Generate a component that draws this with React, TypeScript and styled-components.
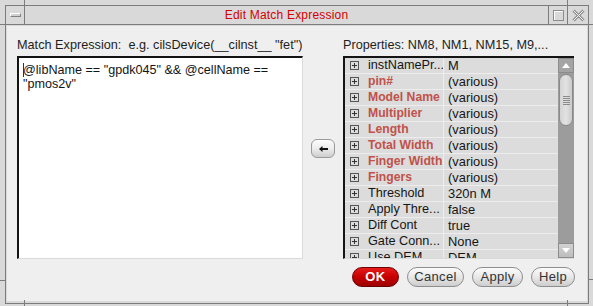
import React from "react";
import styled, { createGlobalStyle } from "styled-components";

const Global = createGlobalStyle`
  html, body { margin: 0; padding: 0; background: #d9d9d9; }
  body {
    width: 593px; height: 306px; overflow: hidden;
    font-family: "Liberation Sans", Arial, sans-serif;
  }
`;

const FRAME = "#d9d9d9";
const LINE = "#7c7c7c";

const Screen = styled.div`
  position: relative;
  width: 593px;
  height: 306px;
  box-sizing: border-box;
  padding: 5px 4px 2px 5px;
  background: ${FRAME};
  display: flex;
`;

const Tick = styled.div<{ $x: number; $y: number; $w: number; $h: number }>`
  position: absolute;
  left: ${(p) => p.$x}px;
  top: ${(p) => p.$y}px;
  width: ${(p) => p.$w}px;
  height: ${(p) => p.$h}px;
  background: ${LINE};
`;

const Window = styled.div`
  flex: 1;
  display: flex;
  flex-direction: column;
  border: 1px solid ${LINE};
  background: ${FRAME};
`;

const TitleBar = styled.div`
  display: flex;
  height: 19px;
  box-sizing: border-box;
  border-bottom: 1px solid ${LINE};
`;

const TitleCell = styled.div<{ $w?: number; $side?: "left" | "right" }>`
  ${(p) => (p.$w ? `width: ${p.$w}px;` : "flex: 1;")}
  box-sizing: border-box;
  ${(p) => (p.$side === "left" ? `border-right: 1px solid ${LINE};` : "")}
  ${(p) => (p.$side === "right" ? `border-left: 1px solid ${LINE};` : "")}
  display: flex;
  align-items: center;
  justify-content: center;
`;

const Title = styled.span`
  font-size: 12px;
  color: #d40000;
  letter-spacing: 0.2px;
`;

const MinBar = styled.div`
  width: 11px;
  height: 4px;
  box-sizing: border-box;
  border: 1px solid;
  border-color: #ffffff #808080 #808080 #ffffff;
  margin-left: 1px;
  background: #d0d0d0;
`;

const MaxBox = styled.div`
  width: 11px;
  height: 11px;
  box-sizing: border-box;
  border: 1px solid #8c8c8c;
  box-shadow: inset 1px 1px 0 #ffffff;
  margin-left: 1px;
  margin-top: 1px;
`;

const Body = styled.div`
  flex: 1;
  padding: 1px 1px 2px 1px;
  display: flex;
`;

const Panel = styled.div`
  flex: 1;
  background: #efefef;
  padding: 12px 13px 13px 10px;
  display: flex;
  flex-direction: column;
`;

const Main = styled.div`
  display: grid;
  grid-template-columns: 286px 24px 231px;
  grid-template-rows: 14px 203px;
  column-gap: 8px;
  row-gap: 4px;
`;

const Label = styled.div<{ $col: number }>`
  grid-column: ${(p) => p.$col};
  grid-row: 1;
  font-size: 12.7px;
  line-height: 14px;
  color: #1e1e1e;
  white-space: pre;
`;

const TextBox = styled.div`
  grid-column: 1;
  grid-row: 2;
  background: #ffffff;
  border-top: 2px solid #141414;
  border-left: 2px solid #141414;
  border-right: 1px solid #dadada;
  border-bottom: 1px solid #dadada;
  padding: 5px 4px;
  font-size: 12.6px;
  line-height: 14px;
  color: #141414;
  overflow: hidden;
`;

const Caret = styled.span`
  display: inline-block;
  width: 1px;
  height: 14px;
  background: #333;
  vertical-align: -3px;
  margin-right: -1px;
`;

const ArrowButton = styled.button`
  grid-column: 2;
  grid-row: 2;
  align-self: start;
  margin-top: 83px;
  width: 24px;
  height: 19px;
  padding: 0;
  border: 1px solid #9a9a9a;
  border-radius: 6px;
  background: linear-gradient(#fdfdfd, #ececec 50%, #cdcdcd);
  display: flex;
  align-items: center;
  justify-content: center;
`;

const PropBox = styled.div`
  grid-column: 3;
  grid-row: 2;
  border-top: 2px solid #141414;
  border-left: 2px solid #141414;
  border-bottom: 1px solid #dadada;
  display: flex;
  overflow: hidden;
`;

const PropList = styled.div`
  flex: 1;
  background: #dcdcdc;
  overflow: hidden;
`;

const Row = styled.div`
  display: grid;
  grid-template-columns: 98px 1px 1fr;
  height: 16px;
  box-sizing: border-box;
  border-bottom: 1px solid #ededed;
  background: #dcdcdc;
`;

const NameCell = styled.div<{ $strong: boolean }>`
  display: flex;
  align-items: center;
  gap: 9px;
  padding-left: 5px;
  font-size: ${(p) => (p.$strong ? "12.2px" : "12.7px")};
  line-height: 15px;
  white-space: nowrap;
  overflow: hidden;
  font-weight: ${(p) => (p.$strong ? 700 : 400)};
  color: ${(p) => (p.$strong ? "#c0524a" : "#151515")};
`;

const Divider = styled.div`
  background: #ededed;
`;

const ValueCell = styled.div`
  padding-left: 4px;
  font-size: 12.9px;
  line-height: 15px;
  color: #151515;
  white-space: nowrap;
  overflow: hidden;
`;

const ScrollBar = styled.div`
  width: 16px;
  display: flex;
  flex-direction: column;
  background: #9c9c9c;
`;

const ScrollBtn = styled.div<{ $light?: boolean }>`
  height: 15px;
  box-sizing: border-box;
  border: 1px solid #8c8c8c;
  background: ${(p) => (p.$light ? "linear-gradient(#d2d2d2, #bdbdbd)" : "#a4a4a4")};
  display: flex;
  align-items: center;
  justify-content: center;
`;

const Thumb = styled.div`
  height: 52px;
  margin: 1px 1px 0 1px;
  box-sizing: border-box;
  border: 1px solid #8a8a8a;
  border-radius: 7px;
  background: linear-gradient(to right, #d4d4d4, #e2e2e2 50%, #cbcbcb);
  display: flex;
  flex-direction: column;
  align-items: center;
  justify-content: center;
  gap: 1px;
`;

const Grip = styled.div`
  width: 7px;
  height: 1px;
  background: #8a8a8a;
`;

const Track = styled.div`
  flex: 1;
`;

const ButtonRow = styled.div`
  margin-top: 8px;
  display: flex;
  justify-content: flex-end;
  gap: 8px;
  margin-right: -1px;
`;

const PillButton = styled.button<{ $w: number; $primary?: boolean }>`
  width: ${(p) => p.$w}px;
  height: 20px;
  padding: 0;
  border-radius: 10px;
  border: 1px solid ${(p) => (p.$primary ? "#6a0000" : "#8e8e8e")};
  background: ${(p) =>
    p.$primary
      ? "linear-gradient(#e61a1a, #c80000 50%, #9c0000)"
      : "linear-gradient(#fbfbfb, #e8e8e8 50%, #cdcdcd)"};
  color: ${(p) => (p.$primary ? "#ffffff" : "#333333")};
  font-family: "Liberation Sans", Arial, sans-serif;
  font-size: 13px;
  font-weight: ${(p) => (p.$primary ? 700 : 400)};
  letter-spacing: ${(p) => (p.$primary ? "0.5px" : "0.3px")};
  line-height: 18px;
`;

const ExpandIcon = () => (
  <svg width="9" height="9" viewBox="0 0 9 9" style={{ flex: "none" }}>
    <rect x="0.5" y="0.5" width="8" height="8" fill="none" stroke="#555" />
    <path d="M2 4.5h5M4.5 2v5" stroke="#333" />
  </svg>
);

const rows = [
  { name: "instNamePr...", value: "M", strong: false },
  { name: "pin#", value: "(various)", strong: true },
  { name: "Model Name", value: "(various)", strong: true },
  { name: "Multiplier", value: "(various)", strong: true },
  { name: "Length", value: "(various)", strong: true },
  { name: "Total Width", value: "(various)", strong: true },
  { name: "Finger Width", value: "(various)", strong: true },
  { name: "Fingers", value: "(various)", strong: true },
  { name: "Threshold", value: "320n M", strong: false },
  { name: "Apply Thre...", value: "false", strong: false },
  { name: "Diff Cont", value: "true", strong: false },
  { name: "Gate Conn...", value: "None", strong: false },
  { name: "Use DEM", value: "DEM", strong: false },
];

export default function App() {
  return (
    <>
      <Global />
      <Screen>
        <Tick $x={24} $y={0} $w={1} $h={5} />
        <Tick $x={567} $y={0} $w={1} $h={5} />
        <Tick $x={24} $y={300} $w={1} $h={6} />
        <Tick $x={567} $y={300} $w={1} $h={6} />
        <Tick $x={0} $y={24} $w={5} $h={1} />
        <Tick $x={589} $y={24} $w={4} $h={1} />
        <Tick $x={0} $y={280} $w={5} $h={1} />
        <Tick $x={589} $y={279} $w={4} $h={1} />
        <Window>
          <TitleBar>
            <TitleCell $w={19} $side="left">
              <MinBar />
            </TitleCell>
            <TitleCell>
              <Title>Edit Match Expression</Title>
            </TitleCell>
            <TitleCell $w={19} $side="right">
              <MaxBox />
            </TitleCell>
            <TitleCell $w={21} $side="right">
              <svg width="13" height="13" viewBox="0 0 13 13">
                <path d="M1.5 1.5L11.5 11.5M11.5 1.5L1.5 11.5" stroke="#8e8e8e" strokeWidth="3" />
                <path d="M1.5 1.5L11.5 11.5M11.5 1.5L1.5 11.5" stroke="#f2f2f2" strokeWidth="1" />
              </svg>
            </TitleCell>
          </TitleBar>
          <Body>
            <Panel>
              <Main>
                <Label $col={1}>{'Match Expression:  e.g. cilsDevice(__cilnst__ "fet")'}</Label>
                <Label $col={3}>Properties: NM8, NM1, NM15, M9,...</Label>
                <TextBox>
                  <Caret />
                  @libName == "gpdk045" &amp;&amp; @cellName == "pmos2v"
                </TextBox>
                <ArrowButton>
                  <svg width="9" height="6" viewBox="0 0 9 6">
                    <path d="M0 3L3.5 0V6Z" fill="#111" />
                    <rect x="3" y="2" width="6" height="2" fill="#111" />
                  </svg>
                </ArrowButton>
                <PropBox>
                  <PropList>
                    {rows.map((r) => (
                      <Row key={r.name}>
                        <NameCell $strong={r.strong}>
                          <ExpandIcon />
                          {r.name}
                        </NameCell>
                        <Divider />
                        <ValueCell>{r.value}</ValueCell>
                      </Row>
                    ))}
                  </PropList>
                  <ScrollBar>
                    <ScrollBtn>
                      <svg width="8" height="5" viewBox="0 0 8 5">
                        <path d="M0 5L4 0L8 5Z" fill="#ffffff" />
                      </svg>
                    </ScrollBtn>
                    <Thumb>
                      <Grip />
                      <Grip />
                      <Grip />
                      <Grip />
                      <Grip />
                    </Thumb>
                    <Track />
                    <ScrollBtn $light>
                      <svg width="8" height="5" viewBox="0 0 8 5">
                        <path d="M0 0L8 0L4 5Z" fill="#ffffff" />
                      </svg>
                    </ScrollBtn>
                  </ScrollBar>
                </PropBox>
              </Main>
              <ButtonRow>
                <PillButton $w={47} $primary>OK</PillButton>
                <PillButton $w={57}>Cancel</PillButton>
                <PillButton $w={51}>Apply</PillButton>
                <PillButton $w={44}>Help</PillButton>
              </ButtonRow>
            </Panel>
          </Body>
        </Window>
      </Screen>
    </>
  );
}
